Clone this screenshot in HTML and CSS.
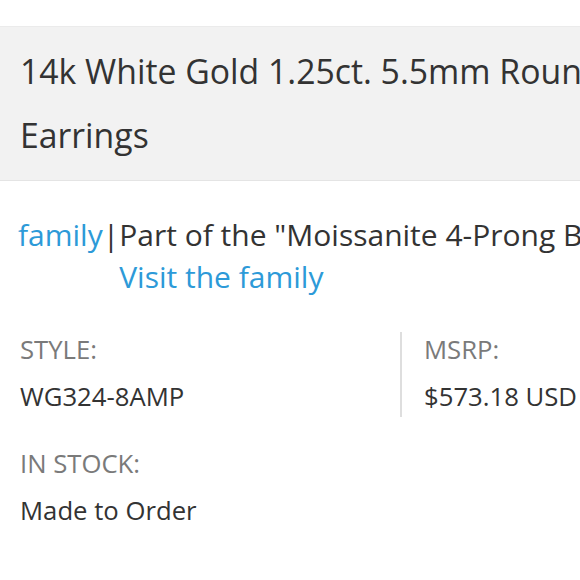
FILE: index.html
```html
<!DOCTYPE html>
<html lang="en">
<head>
<meta charset="utf-8">
<title>14k White Gold 1.25ct. 5.5mm Round Moissanite Earrings</title>
<link rel="stylesheet" href="styles.css">
</head>
<body>
<div class="page">
  <header class="title-band">
    <h1 class="title">
      <span class="title-line">14k White Gold 1.25ct. 5.5mm Round Moissanite 4-Prong Basket Stud</span>
      <span class="title-line">Earrings</span>
    </h1>
  </header>

  <section class="family">
    <a class="link" href="#">family</a><span class="pipe">|</span>
    <div class="family-text">
      <span class="family-desc">Part of the "Moissanite 4-Prong Basket Stud Earrings" family</span>
      <a class="link" href="#">Visit the family</a>
    </div>
  </section>

  <section class="specs">
    <div class="spec">
      <div class="spec-label">STYLE:</div>
      <div class="spec-value">WG324-8AMP</div>
    </div>
    <div class="spec spec-divided">
      <div class="spec-label">MSRP:</div>
      <div class="spec-value">$573.18 USD</div>
    </div>
    <div class="spec">
      <div class="spec-label">IN STOCK:</div>
      <div class="spec-value">Made to Order</div>
    </div>
  </section>
</div>
</body>
</html>
```
FILE: styles.css
```css
html, body {
  margin: 0;
  padding: 0;
  background: #ffffff;
  overflow: hidden;
}

body {
  font-family: "Open Sans", "Liberation Sans", Arial, sans-serif;
  color: #333333;
}

.page {
  width: 1100px;
  padding-top: 26px;
}

.title-band {
  background: #f2f2f2;
  border-top: 1px solid #ebebeb;
  border-bottom: 1px solid #e4e4e4;
  padding: 12px 20px 13px 20px;
}

.title {
  margin: 0;
  font-size: 33.75px;
  line-height: 64px;
  font-weight: 400;
  color: #333333;
}

.title-line {
  display: block;
  white-space: nowrap;
}

.family {
  display: flex;
  align-items: flex-start;
  margin-top: 33px;
  padding-left: 18px;
  font-size: 30px;
  line-height: 42px;
  white-space: nowrap;
}

.link {
  color: #2d9ad8;
  text-decoration: none;
}

.pipe {
  color: #333333;
}

.family-text {
  display: flex;
  flex-direction: column;
  align-items: flex-start;
  color: #333333;
}

.specs {
  display: grid;
  grid-template-columns: 380px 380px;
  row-gap: 31px;
  margin-top: 34px;
  padding-left: 20px;
  font-size: 25.7px;
  line-height: 36px;
  white-space: nowrap;
}

.spec-label {
  color: #7a7a7a;
}

.spec-value {
  margin-top: 11px;
  color: #333333;
}

.spec-divided {
  border-left: 2px solid #dedede;
  padding-left: 22px;
  margin-bottom: -2px;
}
```
